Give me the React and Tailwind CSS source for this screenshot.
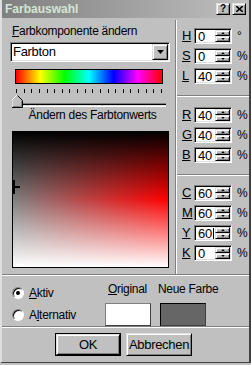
import React from 'react';

const sunken =
  'border border-t-[#808080] border-l-[#808080] border-b-white border-r-white shadow-[inset_1px_1px_0_#000,inset_-1px_-1px_0_#dfdfdf]';
const raised =
  'border border-t-[#dfdfdf] border-l-[#dfdfdf] border-b-black border-r-black shadow-[inset_1px_1px_0_#fff,inset_-1px_-1px_0_#808080]';

const Arrow = ({ up, size = 5 }) => (
  <svg width={size} height={Math.ceil(size / 2)} viewBox="0 0 5 3">
    <path d={up ? 'M2.5 0 L5 3 L0 3 Z' : 'M0 0 L5 0 L2.5 3 Z'} fill="#000" />
  </svg>
);

const Spin = ({ label, value, unit, caret }) => (
  <div className="flex items-center h-[16px]">
    <span className="w-[12px] text-[13px] leading-[16px] underline underline-offset-[1px]">{label}</span>
    <div className={`flex w-[38px] h-[16px] bg-white ${sunken}`}>
      <span className="flex-1 pl-[3px] text-[13px] leading-[13px] flex items-center">
        {value}
        {caret && <span className="w-px h-[11px] bg-black ml-px" />}
      </span>
      <div className="flex flex-col w-[16px] py-[1px] pr-[1px]">
        <div className={`flex-1 flex items-center justify-center bg-[#c0c0c0] ${raised}`}>
          <Arrow up size={4} />
        </div>
        <div className={`flex-1 flex items-center justify-center bg-[#c0c0c0] ${raised}`}>
          <Arrow size={4} />
        </div>
      </div>
    </div>
    <span className="ml-[5px] text-[12px] leading-[16px]">{unit}</span>
  </div>
);

const Sep = () => <div className="h-[2px] border-t border-t-[#808080] border-b border-b-white" />;

const Radio = ({ checked, children }) => (
  <div className="flex items-center h-[12px]">
    <div className="w-[12px] h-[12px] rounded-full bg-white border border-t-[#808080] border-l-[#808080] border-b-white border-r-white shadow-[inset_1px_1px_0_#000] flex items-center justify-center">
      {checked && <div className="w-[4px] h-[4px] rounded-full bg-black" />}
    </div>
    <span className="ml-[5px]">{children}</span>
  </div>
);

export default function App() {
  const ticks = Array.from({ length: 20 });
  return (
    <div className="w-[251px] h-[365px] bg-[#c0c0c0] overflow-hidden font-['Liberation_Sans',Arial,sans-serif] text-[12px] tracking-[-0.3px] text-black">
      <div className="w-[251px] h-[363px] flex flex-col border-r-2 border-b border-r-[#404040] border-b-[#404040] border-l-2 border-l-[#dfdfdf]">
        {/* title bar */}
        <div className="h-[18px] flex items-center justify-between pl-[3px] pr-[3px] bg-gradient-to-r from-[#808080] to-[#c0c0c0]">
          <span className="font-bold text-[12px] tracking-[0px] text-[#d4e6d4]">Farbauswahl</span>
          <div className="flex gap-[2px]">
            <div className={`w-[14px] h-[12px] bg-[#c0c0c0] flex items-center justify-center text-[10px] font-bold leading-none ${raised}`}>?</div>
            <div className={`w-[14px] h-[12px] bg-[#c0c0c0] flex items-center justify-center ${raised}`}>
              <svg width="7" height="6" viewBox="0 0 7 6">
                <path d="M0 0 L7 6 M7 0 L0 6" stroke="#000" strokeWidth="1.6" />
              </svg>
            </div>
          </div>
        </div>

        {/* main */}
        <div className="flex h-[256px]">
          <div className="w-[173px] flex flex-col">
            <div className="mt-[6px] ml-[10px] h-[14px] leading-[14px]">
              <span className="underline">F</span>arbkomponente ändern
            </div>
            <div className={`mt-[4px] ml-[8px] w-[160px] h-[20px] bg-white flex items-center ${sunken}`}>
              <span className="flex-1 pl-[2px] text-[13px]">Farbton</span>
              <div className={`w-[16px] h-[16px] mr-[1px] bg-[#c0c0c0] flex items-center justify-center ${raised}`}>
                <Arrow size={7} />
              </div>
            </div>
            <div className="mt-[7px] ml-[13px] w-[148px] h-[15px] border border-black bg-[linear-gradient(to_right,#f00,#ff0,#0f0,#0ff,#00f,#f0f,#f00)]" />
            <div className="mt-[5px] ml-[14px] w-[146px] h-[4px] flex justify-between">
              {ticks.map((_, i) => (
                <div key={i} className="w-px h-[4px] bg-black" />
              ))}
            </div>
            <div className="relative mt-[2px] ml-[12px] w-[152px] h-[13px] pt-[8px]">
              <div className="h-[4px] border-t border-t-[#808080] border-b border-b-white shadow-[inset_0_1px_0_#000,inset_0_-1px_0_#dfdfdf]" />
              <svg className="absolute left-[-2px] top-0" width="11" height="13" viewBox="0 0 11 13">
                <path d="M5 0 L10 5 L10 12 L0 12 L0 5 Z" fill="#c0c0c0" />
                <path d="M0 12 L0 5 L5 0" fill="none" stroke="#fff" strokeWidth="1" />
                <path d="M5.5 0.5 L10.5 5.5 L10.5 12.5 L0 12.5" fill="none" stroke="#000" strokeWidth="1" />
                <path d="M9.5 6 L9.5 11.5 L1 11.5" fill="none" stroke="#808080" strokeWidth="1" />
              </svg>
            </div>
            <div className="h-[14px] leading-[14px] text-center pl-[8px]">Ändern des Farbtonwerts</div>
            <div className="relative mt-[9px] ml-[10px] w-[157px] h-[137px] border border-black bg-[linear-gradient(to_bottom,rgba(0,0,0,1)_0%,rgba(0,0,0,0)_50%,rgba(255,255,255,0)_50%,rgba(255,255,255,1)_100%),linear-gradient(to_right,#808080,#ff0000)]">
              <div className="absolute left-0 top-[48px] w-[2px] h-[14px] bg-black" />
              <div className="absolute left-0 top-[54px] w-[7px] h-[2px] bg-black" />
            </div>
          </div>
          <div className="mt-[2px] w-[2px] border-l border-l-[#808080] border-r border-r-white" />
          <div className="flex-1 flex flex-col">
            <div className="pl-[5px] pt-[10px] flex flex-col gap-[4px]">
              <Spin label="H" value="0" unit="°" />
              <Spin label="S" value="0" unit="%" />
              <Spin label="L" value="40" unit="%" />
            </div>
            <div className="mt-[11px]"><Sep /></div>
            <div className="pl-[5px] pt-[10px] flex flex-col gap-[4px]">
              <Spin label="R" value="40" unit="%" />
              <Spin label="G" value="40" unit="%" />
              <Spin label="B" value="40" unit="%" />
            </div>
            <div className="mt-[11px]"><Sep /></div>
            <div className="pl-[5px] pt-[9px] flex flex-col gap-[4px]">
              <Spin label="C" value="60" unit="%" />
              <Spin label="M" value="60" unit="%" />
              <Spin label="Y" value="60" unit="%" caret />
              <Spin label="K" value="0" unit="%" />
            </div>
          </div>
        </div>

        <Sep />

        {/* options */}
        <div className="h-[50px] flex">
          <div className="w-[103px] pl-[10px] pt-[11px] flex flex-col gap-[10px]">
            <Radio checked>
              <span className="underline">A</span>ktiv
            </Radio>
            <Radio>
              A<span className="underline">l</span>ternativ
            </Radio>
          </div>
          <div className="w-[55px] pt-[6px] flex flex-col items-start">
            <div className="h-[14px] leading-[14px] pl-[3px]">
              <span className="underline">O</span>riginal
            </div>
            <div className="mt-[7px] w-[46px] h-[23px] bg-white border border-t-[#808080] border-l-[#808080] border-b-[#404040] border-r-[#404040]" />
          </div>
          <div className="pt-[6px] flex flex-col items-start">
            <div className="h-[14px] leading-[14px] -ml-[2px]">Neue Farbe</div>
            <div className="mt-[7px] w-[46px] h-[23px] bg-[#666666] border border-t-black border-l-black border-b-[#404040] border-r-[#404040]" />
          </div>
        </div>

        <Sep />

        {/* buttons */}
        <div className="flex-1 flex justify-center gap-[5px] pt-[5px] pr-[4px]">
          <div className="w-[66px] h-[23px] border border-black">
            <div className={`w-full h-full bg-[#c0c0c0] flex items-center justify-center text-[13px] ${raised}`}>OK</div>
          </div>
          <div className={`w-[66px] h-[23px] bg-[#c0c0c0] flex items-center justify-center text-[13px] ${raised}`}>Abbrechen</div>
        </div>
      </div>
    </div>
  );
}
